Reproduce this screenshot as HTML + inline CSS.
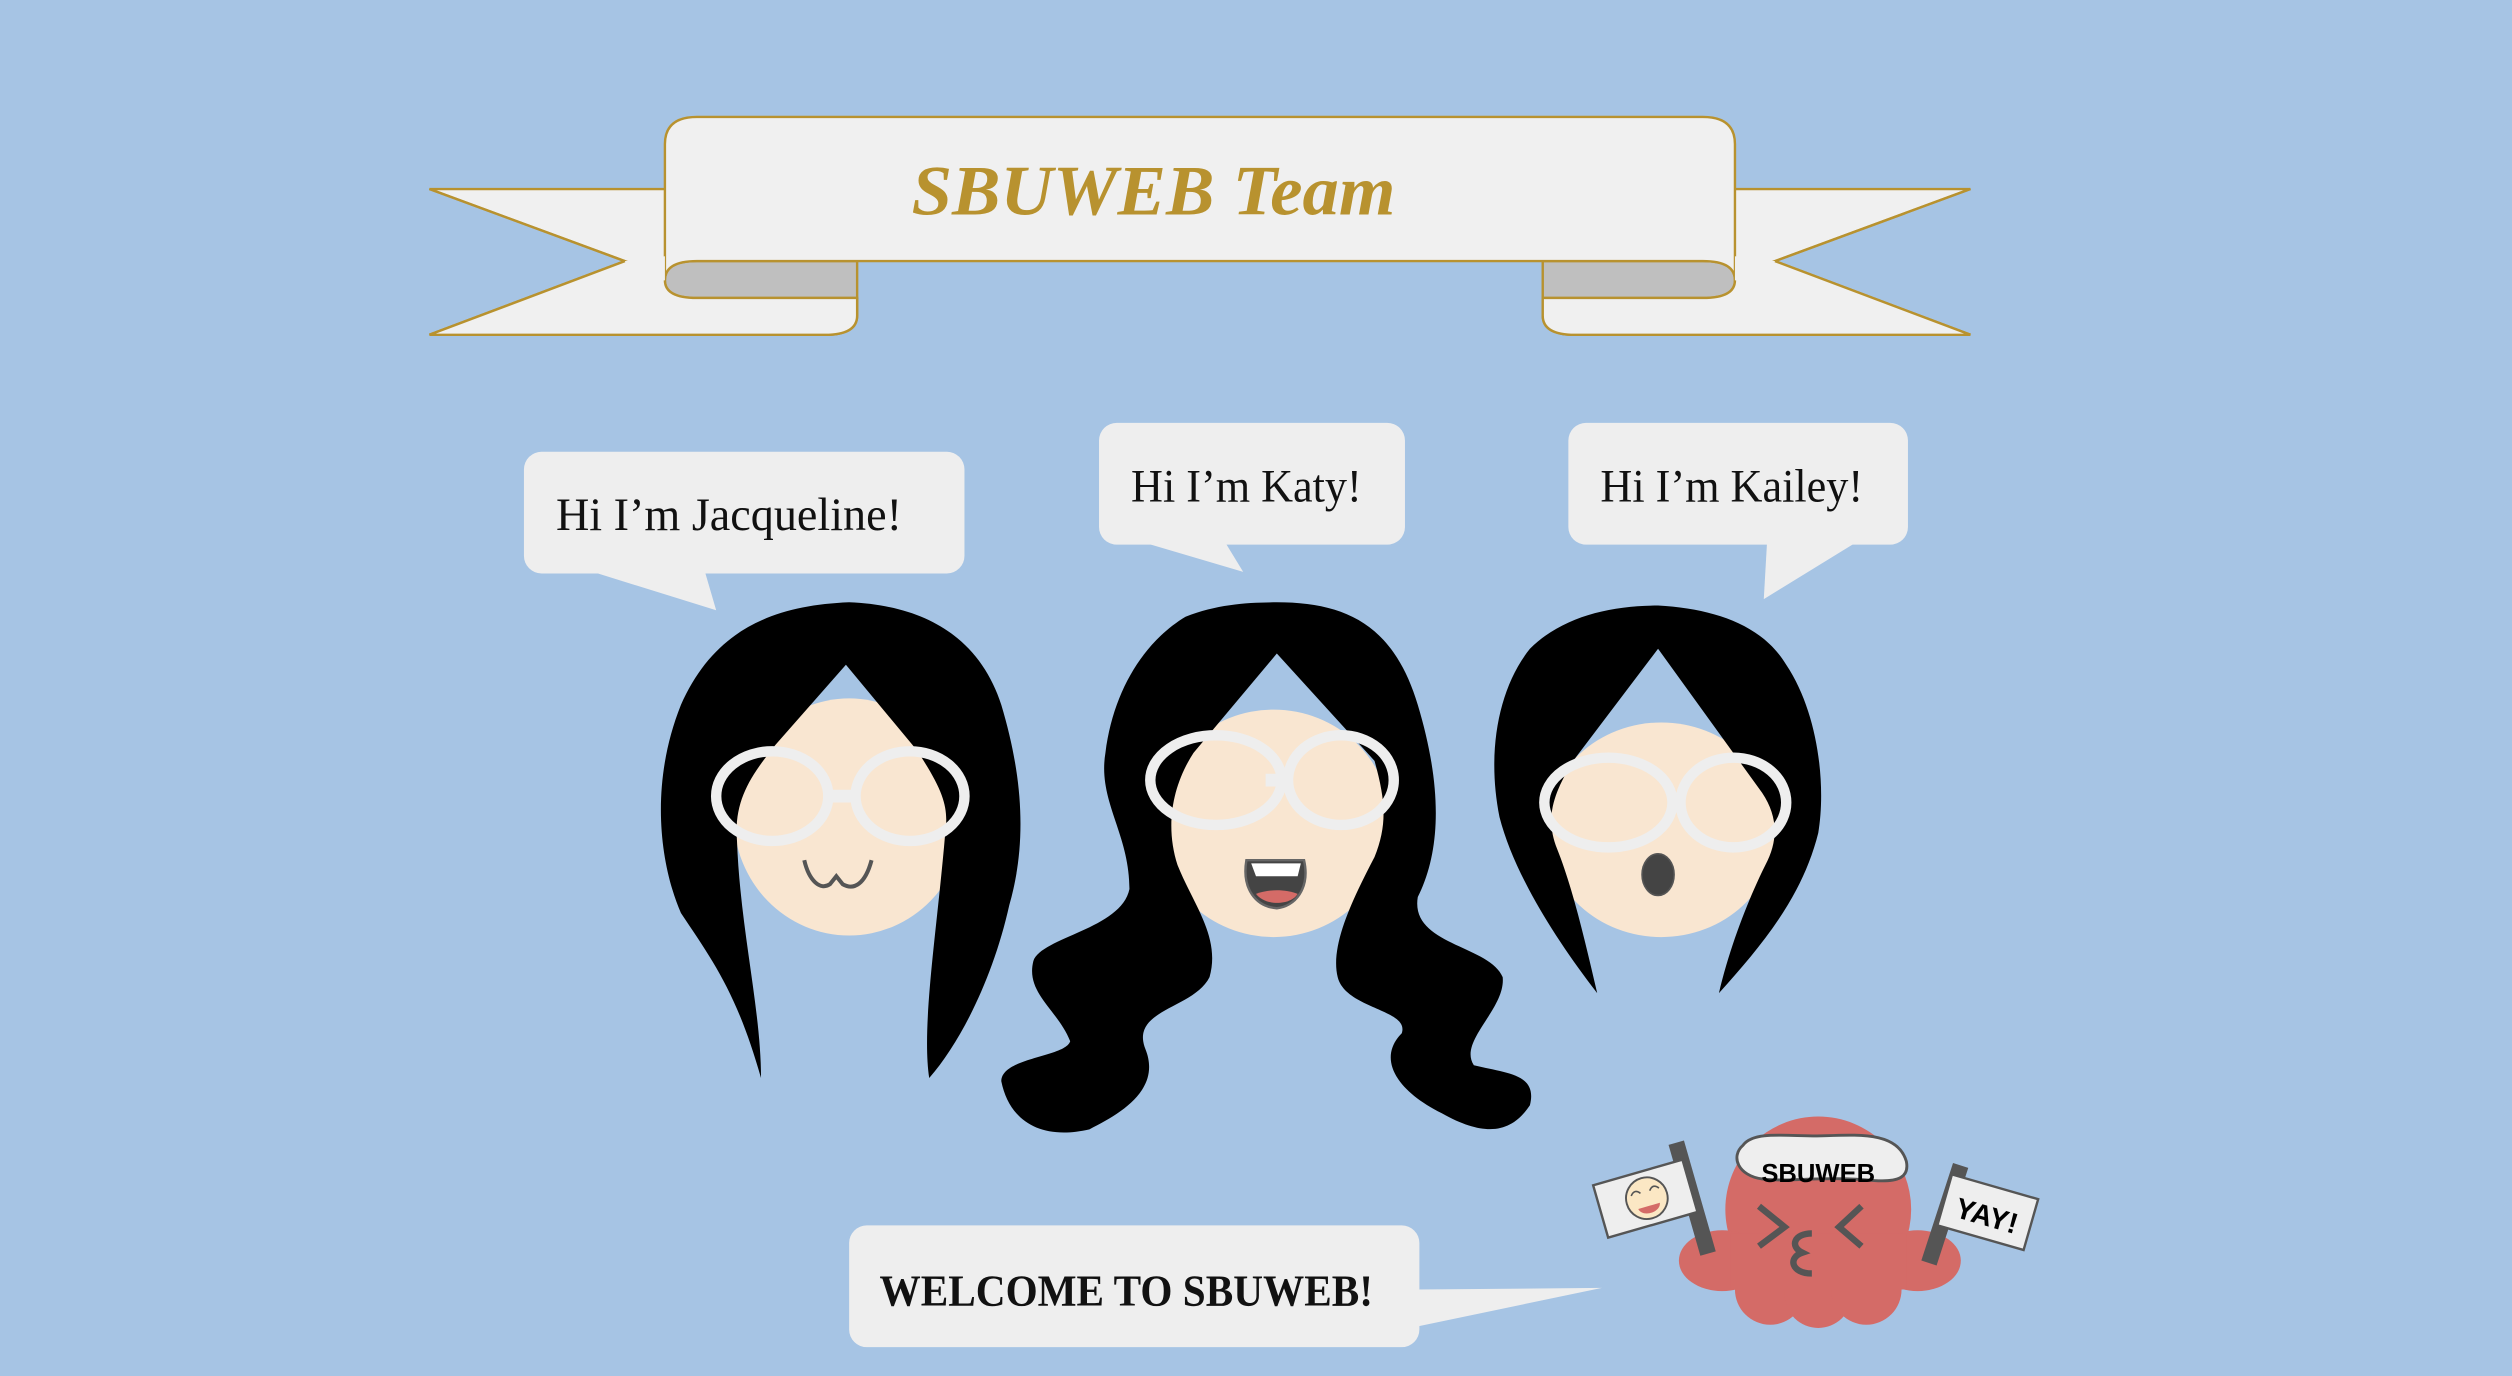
<!DOCTYPE html>
<html><head><meta charset="utf-8"><style>
html,body{margin:0;padding:0;background:#a6c4e4;overflow:hidden}
svg{display:block}
</style></head><body>
<svg width="2512" height="1376" viewBox="0 0 1568 859" xmlns="http://www.w3.org/2000/svg">
<rect width="1568" height="859" fill="#a6c4e4"/>
<!-- banner -->
<g stroke="#b8922f" stroke-width="1.5" fill="#f0f0f0">
 <path d="M268,118 L420,118 L420,209 L515,209 Q535,209 535,197 L535,186 L420,186 L268,209 L390,163 Z"/>
 <path d="M1230,118 L1078,118 L1078,209 L983,209 Q963,209 963,197 L963,186 L1078,186 L1230,209 L1108,163 Z"/>
 <path d="M268,209 L390,163 L268,118 M1230,209 L1108,163 L1230,118" fill="none"/>
 <path d="M435,163 L535,163 L535,186 L435,186 Q415,186 415,175 Q415,163 435,163 Z" fill="#bfbfbf"/>
 <path d="M1063,163 L963,163 L963,186 L1063,186 Q1083,186 1083,175 Q1083,163 1063,163 Z" fill="#bfbfbf"/>
 <path d="M415,175 L415,90 Q415,73 435,73 L1063,73 Q1083,73 1083,90 L1083,175 Q1083,163 1063,163 L435,163 Q415,163 415,175 Z"/>
</g>
<path d="M268,209 L515,209 Q535,209 535,197 L535,186 L435,186 Q415,186 415,175 L415,160 L390,163 Z" fill="#f0f0f0"/>
<path d="M1230,209 L983,209 Q963,209 963,197 L963,186 L1063,186 Q1083,186 1083,175 L1083,160 L1108,163 Z" fill="#f0f0f0"/>
<path d="M268,209 L515,209 Q535,209 535,197 L535,186 M390,163 L268,209 M1230,209 L983,209 Q963,209 963,197 L963,186 M1108,163 L1230,209 M415,175 Q415,186 435,186 L535,186 M1083,175 Q1083,186 1063,186 L963,186" fill="none" stroke="#b8922f" stroke-width="1.5"/>
<text x="569" y="134" font-family="Liberation Serif, serif" font-style="italic" font-weight="bold" font-size="44" fill="#b8922f" textLength="302" lengthAdjust="spacingAndGlyphs">SBUWEB Team</text>

<!-- bubbles -->
<g fill="#eeeeee">
 <rect x="327" y="282" width="275" height="76" rx="11"/>
 <polygon points="370,357 440,357 447,381"/>
 <rect x="686" y="264" width="191" height="76" rx="11"/>
 <polygon points="715,339 765,339 776,357"/>
 <rect x="979" y="264" width="212" height="76" rx="11"/>
 <polygon points="1103,339 1158,339 1101,374"/>
 <rect x="530" y="765" width="356" height="76" rx="11"/>
 <polygon points="885,805 1000,804 885,828"/>
</g>
<g font-family="Liberation Serif, serif" font-size="29" fill="#111">
 <text x="347" y="331" textLength="216" lengthAdjust="spacingAndGlyphs">Hi I’m Jacqueline!</text>
 <text x="706" y="313" textLength="144" lengthAdjust="spacingAndGlyphs">Hi I’m Katy!</text>
 <text x="999" y="313" textLength="164" lengthAdjust="spacingAndGlyphs">Hi I’m Kailey!</text>
 <text x="549" y="815" font-weight="bold" font-size="28" textLength="308" lengthAdjust="spacingAndGlyphs">WELCOME  TO  SBUWEB!</text>
</g>

<!-- Jacqueline -->
<ellipse cx="530" cy="510" rx="72" ry="74" fill="#f9e6d1"/>
<path d="M475,673 C460,620 445,600 425,570 C412,540 405,490 425,440 C445,395 480,378 530,376 C580,378 612,400 625,440 C640,490 640,530 630,565 C620,610 600,650 580,673 C575,640 585,580 590,520 C592,505 590,495 572,468 L528,415 L484,465 C468,485 458,500 460,525 C462,580 475,630 475,673 Z" fill="#000"/>
<!-- Katy -->
<ellipse cx="795" cy="514" rx="73" ry="71" fill="#f9e6d1"/>
<path d="M797,376 C840,376 870,390 885,440 C900,490 900,530 885,560 C880,590 930,590 938,610 C940,630 910,650 920,665 C940,670 960,670 955,690 C945,705 930,712 900,695 C870,680 860,660 875,645 C880,630 840,630 835,610 C830,590 845,560 858,535 C866,515 865,500 858,475 L797,408 L745,470 C732,490 727,515 735,540 C745,565 762,585 755,610 C745,630 705,630 715,655 C725,680 700,695 680,705 C650,712 630,700 625,675 C625,660 665,660 668,650 C660,630 640,620 645,600 C650,585 700,580 705,555 C705,520 685,500 690,470 C695,430 715,400 740,385 C760,377 780,376 797,376 Z" fill="#000"/>
<!-- Kailey -->
<ellipse cx="1037" cy="518" rx="72" ry="67" fill="#f9e6d1"/>
<path d="M997,620 C970,585 945,545 936,510 C928,470 935,430 955,405 C975,385 1005,378 1035,378 C1070,380 1100,390 1115,415 C1135,445 1140,490 1135,520 C1125,560 1100,590 1073,620 C1080,590 1092,560 1102,540 C1110,525 1110,510 1100,495 L1035,405 L982,475 C970,495 964,510 972,530 C982,555 990,590 997,620 Z" fill="#000"/>

<!-- glasses -->
<g fill="none" stroke="#eeeeee" stroke-width="6.5">
 <ellipse cx="482" cy="497" rx="35" ry="28"/>
 <ellipse cx="568" cy="497" rx="34" ry="28"/>
 <line x1="517" y1="497" x2="534" y2="497" stroke-width="8"/>
 <ellipse cx="759" cy="487" rx="41" ry="28"/>
 <ellipse cx="837" cy="487" rx="33" ry="28"/>
 <line x1="800" y1="487" x2="804" y2="487" stroke-width="8"/>
 <line x1="790" y1="487" x2="806" y2="487" stroke-width="8"/>
 <ellipse cx="1004" cy="501" rx="40" ry="28"/>
 <ellipse cx="1082" cy="501" rx="33" ry="28"/>
 <line x1="1044" y1="502" x2="1049" y2="502" stroke-width="8"/>
</g>
<!-- mouths -->
<path d="M502,537 C505,550 512,556 518,552 L522,547 L526,552 C533,556 540,552 544,537" fill="none" stroke="#555" stroke-width="2.5"/>
<path d="M778,537 L814,537 C818,555 808,566 797,567 C784,566 775,555 778,537 Z" fill="#444" stroke="#666" stroke-width="1.5"/>
<path d="M781,539 L812,539 L810,547 L784,547 Z" fill="#fff"/>
<path d="M784,558 C792,555 802,555 810,558 C806,565 790,566 784,558 Z" fill="#d46b67"/>
<ellipse cx="1035" cy="546" rx="10" ry="13" fill="#444" stroke="#555" stroke-width="1"/>

<!-- octopus -->
<g fill="#d46b67">
 <circle cx="1135" cy="755" r="58"/>
 <ellipse cx="1075" cy="787" rx="27" ry="19"/>
 <ellipse cx="1197" cy="787" rx="27" ry="19"/>
 <circle cx="1105" cy="805" r="22"/>
 <circle cx="1135" cy="808" r="21"/>
 <circle cx="1165" cy="805" r="22"/>
 <rect x="1080" y="770" width="110" height="35"/>
</g>
<path d="M1088,715 C1095,705 1120,710 1140,709 C1165,708 1185,708 1190,725 C1192,735 1185,738 1170,737 C1140,734 1115,738 1100,736 C1085,734 1080,722 1088,715 Z" fill="#eeeeee" stroke="#555" stroke-width="1.8"/>
<text x="1135" y="738" text-anchor="middle" font-family="Liberation Sans, sans-serif" font-weight="bold" font-size="16" fill="#000">SBUWEB</text>
<g fill="none" stroke="#555" stroke-width="4">
 <path d="M1098,753 L1114,766 L1098,778"/>
 <path d="M1162,753 L1148,766 L1162,778"/>
 <path d="M1131,770 C1120,770 1117,778 1125,782 C1116,785 1118,795 1131,795"/>
</g>
<!-- left flag -->
<g transform="rotate(-16 1056 747)"><rect x="1051" y="712" width="10" height="72" fill="#555"/></g>
<g transform="rotate(-16 1028 748)">
 <rect x="998" y="731" width="58" height="34" fill="#eeeeee" stroke="#555" stroke-width="1.5"/>
 <circle cx="1028" cy="748" r="13" fill="#fbe7c4" stroke="#555" stroke-width="1.2"/>
 <path d="M1021,753 L1035,753 C1034,759 1022,759 1021,753 Z" fill="#d46b67"/>
 <path d="M1019,744 q3,-4 6,0 M1031,744 q3,-4 6,0" fill="none" stroke="#555" stroke-width="1"/>
</g>
<!-- right flag -->
<g transform="rotate(18 1214 758)"><rect x="1209" y="726" width="10" height="64" fill="#555"/></g>
<g transform="rotate(16 1240 756)">
 <rect x="1213" y="740" width="56" height="33" fill="#eeeeee" stroke="#555" stroke-width="1.5"/>
 <text x="1241" y="765" text-anchor="middle" font-family="Liberation Sans, sans-serif" font-weight="bold" font-size="18" fill="#000">YAY!</text>
</g>
</svg>
</body></html>
